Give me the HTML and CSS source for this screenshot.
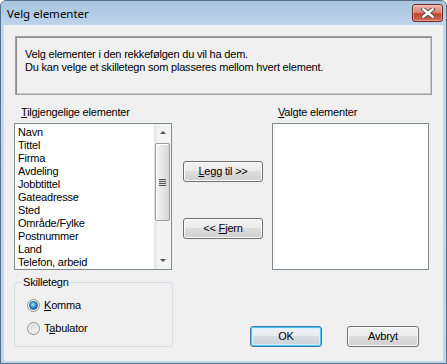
FILE: index.html
```html
<!DOCTYPE html>
<html>
<head>
    <title>Velg elementer</title>
    <link rel="stylesheet" href="styles.css">
</head>
<body>
    <div class="window">
        <div class="titlebar">
            <span class="title">Velg elementer</span>
            <button class="close" aria-label="Lukk">
                <svg width="14" height="10" viewBox="0 0 14 10">
                    <path d="M2 1 L12 9 M12 1 L2 9" stroke="#4a4a4a" stroke-width="4.2" stroke-linecap="square"/>
                    <path d="M2.3 1.3 L11.7 8.7 M11.7 1.3 L2.3 8.7" stroke="#ffffff" stroke-width="2.4" stroke-linecap="square"/>
                </svg>
            </button>
        </div>
        <div class="client">
            <div class="info">
                <p>Velg elementer i den rekkefølgen du vil ha dem.</p>
                <p>Du kan velge et skilletegn som plasseres mellom hvert element.</p>
            </div>
            <div class="pickers">
                <div class="col-left">
                    <div class="label"><u>T</u>ilgjengelige elementer</div>
                    <div class="listbox">
                        <ul class="items">
                            <li>Navn</li>
                            <li>Tittel</li>
                            <li>Firma</li>
                            <li>Avdeling</li>
                            <li>Jobbtittel</li>
                            <li>Gateadresse</li>
                            <li>Sted</li>
                            <li>Område/Fylke</li>
                            <li>Postnummer</li>
                            <li>Land</li>
                            <li>Telefon, arbeid</li>
                        </ul>
                        <div class="scrollbar">
                            <div class="arrow up"><span></span></div>
                            <div class="track">
                                <div class="thumb"><span class="grip"></span></div>
                            </div>
                            <div class="arrow down"><span></span></div>
                        </div>
                    </div>
                </div>
                <div class="col-mid">
                    <button class="btn move"><u>L</u>egg til &gt;&gt;</button>
                    <button class="btn move">&lt;&lt; <u>F</u>jern</button>
                </div>
                <div class="col-right">
                    <div class="label label-right"><u>V</u>algte elementer</div>
                    <div class="listbox"></div>
                </div>
            </div>
            <div class="bottom">
                <fieldset class="group">
                    <legend>Skilletegn</legend>
                    <div class="radio-row">
                        <span class="radio checked"></span>
                        <span><u>K</u>omma</span>
                    </div>
                    <div class="radio-row">
                        <span class="radio"></span>
                        <span>T<u>a</u>bulator</span>
                    </div>
                </fieldset>
                <div class="actions">
                    <button class="btn default">OK</button>
                    <button class="btn">Avbryt</button>
                </div>
            </div>
        </div>
    </div>
</body>
</html>
```
FILE: styles.css
```css
* {
    margin: 0;
    padding: 0;
    box-sizing: border-box;
}
body {
    font-family: 'Liberation Sans', Arial, sans-serif;
    font-size: 11px;
    line-height: 13px;
    letter-spacing: -0.2px;
    color: #000;
    background: #fff;
}
.window {
    width: 447px;
    height: 364px;
    border: 1px solid #54708e;
    border-radius: 6px 6px 0 0;
    background: linear-gradient(#b4cce6, #c3d8ee 25px, #c1d6ed);
    display: flex;
    flex-direction: column;
}
.titlebar {
    height: 24px;
    display: flex;
    align-items: flex-start;
    justify-content: space-between;
    background: linear-gradient(#aac4df, #bdd4ec);
    border-radius: 5px 5px 0 0;
}
.title {
    font-family: 'Noto Sans', 'Liberation Sans', sans-serif;
    font-size: 11.5px;
    line-height: 16px;
    letter-spacing: 0;
    padding: 5px 0 0 6px;
    color: #000;
}
.close {
    width: 31px;
    height: 18px;
    margin: 3px 3px 0 0;
    border: 1px solid #6c2a22;
    border-radius: 3px;
    background: linear-gradient(#e9afa5, #dc8a7c 45%, #c4432f 55%, #d26c55);
    box-shadow: inset 0 0 0 1px rgba(255,255,255,0.35);
    display: flex;
    align-items: center;
    justify-content: center;
}
.client {
    flex: 1;
    margin: 0 3px 2px 3px;
    background: #f0f0f0;
    padding: 11px 14px 14px 10px;
    display: flex;
    flex-direction: column;
}
.info {
    margin-left: 1px;
    width: 417px;
    height: 59px;
    border: 1px solid #a0a0a0;
    box-shadow: inset 1px 1px 0 #8c8c8c, inset -1px -1px 0 #c8c8c8;
    padding: 11px 9px;
}
.pickers {
    margin-top: 11px;
    display: flex;
}
.label {
    padding-left: 7px;
    height: 13px;
    margin-bottom: 4px;
}
.label-right {
    padding-left: 6px;
}
.col-left {
    width: 158px;
}
.col-right {
    width: 157px;
}
.listbox {
    height: 147px;
    border: 1px solid #828790;
    background: #fff;
    display: flex;
}
.items {
    list-style: none;
    flex: 1;
    padding: 2px 0 0 3px;
}
.scrollbar {
    width: 17px;
    display: flex;
    flex-direction: column;
    background: linear-gradient(90deg, #e6e6e6, #f4f4f4 30%, #f4f4f4);
}
.arrow {
    height: 17px;
    display: flex;
    align-items: center;
    justify-content: center;
}
.arrow span {
    width: 0;
    height: 0;
    border-left: 3px solid transparent;
    border-right: 3px solid transparent;
}
.arrow.up span {
    border-bottom: 3px solid #4d4d4d;
}
.arrow.down span {
    border-top: 3px solid #4d4d4d;
}
.track {
    flex: 1;
    padding: 2px 1px 0 1px;
}
.thumb {
    height: 78px;
    border: 1px solid #9a9a9a;
    border-radius: 2px;
    background: linear-gradient(90deg, #f4f4f4, #e6e6e6 50%, #d6d6d6);
    box-shadow: inset 1px 1px 0 #fff;
    display: flex;
    align-items: center;
    justify-content: center;
}
.grip {
    width: 7px;
    height: 7px;
    background: repeating-linear-gradient(#555 0 1px, #ddd 1px 2px);
}
.col-mid {
    width: 80px;
    margin: 55px 9px 0 11px;
    display: flex;
    flex-direction: column;
    gap: 36px;
}
.btn {
    font-family: inherit;
    font-size: 11px;
    line-height: 13px;
    letter-spacing: -0.2px;
    color: #000;
    height: 21px;
    border: 1px solid #707070;
    border-radius: 3px;
    background: linear-gradient(#f2f2f2, #ebebeb 50%, #dddddd 50%, #cfcfcf);
    box-shadow: inset 0 0 0 1px #fcfcfc;
}
.btn u, .label u, .radio-row u {
    text-decoration: underline;
}
.bottom {
    margin-top: 6px;
    display: flex;
    align-items: flex-end;
}
.group {
    width: 159px;
    height: 71px;
    border: 1px solid #d5dfe5;
    border-radius: 3px;
    padding: 0;
}
.group legend {
    margin-left: 7px;
    padding: 0 1px;
    line-height: 13px;
}
.radio-row {
    display: flex;
    align-items: center;
    gap: 4px;
    margin: 10px 0 0 12px;
    height: 13px;
}
.radio {
    width: 13px;
    height: 13px;
    border-radius: 50%;
    border: 1px solid #8e8f8f;
    background: radial-gradient(circle at 60% 65%, #f4f4f4, #d4d4d4 80%);
    box-shadow: inset 0 0 0 1px #f6f6f6;
    display: flex;
    align-items: center;
    justify-content: center;
}
.radio.checked::after {
    content: "";
    width: 7px;
    height: 7px;
    border-radius: 50%;
    background: radial-gradient(circle at 40% 35%, #9de0fb, #2d8ac6 55%, #0e4f88);
    border: 1px solid #1d5f8f;
}
.actions {
    margin-left: 77px;
    display: flex;
    gap: 25px;
}
.actions .btn {
    width: 72px;
}
.btn.default {
    border-color: #3c7fb1;
    box-shadow: inset 0 0 0 1px #48c4f2, inset 0 0 0 2px #d8f1fb;
    background: linear-gradient(#eef2f4, #e6ebee 50%, #d6dde2 50%, #c9d2d8);
}
```
